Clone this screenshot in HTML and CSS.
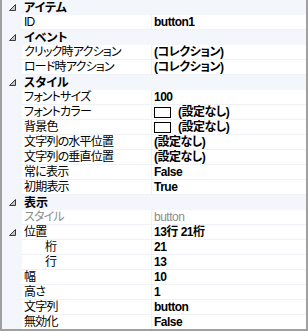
FILE: index.html
```html
<!DOCTYPE html>
<html>
<head>
    <meta charset="utf-8">
    <link rel="stylesheet" href="styles.css">
</head>
<body>
    <div class="pg-grid">
        <div class="pg-cat"><span class="pg-exp"><svg width="7" height="7" viewBox="0 0 7 7"><path d="M6.5 0.5 L6.5 6.5 L0.5 6.5 Z" fill="#c4c4c4" stroke="#3c3c3c" stroke-width="1"/></svg></span><span class="pg-cat-name">アイテム</span></div>
        <div class="pg-row"><span class="pg-margin"></span><span class="pg-label">ID</span><span class="pg-value">button1</span></div>

        <div class="pg-cat"><span class="pg-exp"><svg width="7" height="7" viewBox="0 0 7 7"><path d="M6.5 0.5 L6.5 6.5 L0.5 6.5 Z" fill="#c4c4c4" stroke="#3c3c3c" stroke-width="1"/></svg></span><span class="pg-cat-name">イベント</span></div>
        <div class="pg-row"><span class="pg-margin"></span><span class="pg-label">クリック時アクション</span><span class="pg-value">(コレクション)</span></div>
        <div class="pg-row"><span class="pg-margin"></span><span class="pg-label">ロード時アクション</span><span class="pg-value">(コレクション)</span></div>

        <div class="pg-cat"><span class="pg-exp"><svg width="7" height="7" viewBox="0 0 7 7"><path d="M6.5 0.5 L6.5 6.5 L0.5 6.5 Z" fill="#c4c4c4" stroke="#3c3c3c" stroke-width="1"/></svg></span><span class="pg-cat-name">スタイル</span></div>
        <div class="pg-row"><span class="pg-margin"></span><span class="pg-label">フォントサイズ</span><span class="pg-value">100</span></div>
        <div class="pg-row"><span class="pg-margin"></span><span class="pg-label">フォントカラー</span><span class="pg-value"><span class="pg-swatch"></span>(設定なし)</span></div>
        <div class="pg-row"><span class="pg-margin"></span><span class="pg-label">背景色</span><span class="pg-value"><span class="pg-swatch"></span>(設定なし)</span></div>
        <div class="pg-row"><span class="pg-margin"></span><span class="pg-label">文字列の水平位置</span><span class="pg-value">(設定なし)</span></div>
        <div class="pg-row"><span class="pg-margin"></span><span class="pg-label">文字列の垂直位置</span><span class="pg-value">(設定なし)</span></div>
        <div class="pg-row"><span class="pg-margin"></span><span class="pg-label">常に表示</span><span class="pg-value">False</span></div>
        <div class="pg-row"><span class="pg-margin"></span><span class="pg-label">初期表示</span><span class="pg-value">True</span></div>

        <div class="pg-cat"><span class="pg-exp"><svg width="7" height="7" viewBox="0 0 7 7"><path d="M6.5 0.5 L6.5 6.5 L0.5 6.5 Z" fill="#c4c4c4" stroke="#3c3c3c" stroke-width="1"/></svg></span><span class="pg-cat-name">表示</span></div>
        <div class="pg-row pg-disabled"><span class="pg-margin"></span><span class="pg-label">スタイル</span><span class="pg-value">button</span></div>
        <div class="pg-row"><span class="pg-margin"><svg width="7" height="7" viewBox="0 0 7 7"><path d="M6.5 0.5 L6.5 6.5 L0.5 6.5 Z" fill="#c4c4c4" stroke="#3c3c3c" stroke-width="1"/></svg></span><span class="pg-label">位置</span><span class="pg-value">13行 21桁</span></div>
        <div class="pg-row"><span class="pg-margin"></span><span class="pg-label pg-sub">桁</span><span class="pg-value">21</span></div>
        <div class="pg-row"><span class="pg-margin"></span><span class="pg-label pg-sub">行</span><span class="pg-value">13</span></div>
        <div class="pg-row"><span class="pg-margin"></span><span class="pg-label">幅</span><span class="pg-value">10</span></div>
        <div class="pg-row"><span class="pg-margin"></span><span class="pg-label">高さ</span><span class="pg-value">1</span></div>
        <div class="pg-row"><span class="pg-margin"></span><span class="pg-label">文字列</span><span class="pg-value">button</span></div>
        <div class="pg-row"><span class="pg-margin"></span><span class="pg-label">無効化</span><span class="pg-value">False</span></div>
    </div>
</body>
</html>
```

FILE: styles.css
```css
body {
    margin: 0;
    font-family: "Liberation Sans", "Noto Sans CJK JP", sans-serif;
    font-size: 12px;
    color: #000000;
    font-feature-settings: "palt";
}

.pg-grid {
    width: 308px;
    height: 331px;
    box-sizing: border-box;
    border: solid 2px #a0a0a0;
    border-top: none;
    background: #ffffff;
    overflow: hidden;
}

.pg-cat {
    display: flex;
    align-items: center;
    height: 15px;
    background: #f3f6fb;
}

.pg-exp {
    width: 20px;
    display: flex;
    justify-content: center;
    align-items: center;
}

.pg-cat-name {
    padding-left: 2px;
    font-weight: bold;
    line-height: 14px;
}

.pg-row {
    display: flex;
    height: 15px;
}

.pg-margin {
    width: 20px;
    flex: none;
    background: #f3f6fb;
    display: flex;
    justify-content: center;
    align-items: center;
}

.pg-label {
    width: 127px;
    flex: none;
    padding-left: 2px;
    line-height: 14px;
    border-right: solid 1px #eef1f6;
    border-bottom: solid 1px #eef1f6;
    white-space: nowrap;
    overflow: hidden;
    letter-spacing: -0.8px;
}

.pg-sub {
    padding-left: 23px;
    width: 106px;
}

.pg-value {
    flex: 1;
    display: flex;
    align-items: center;
    padding-left: 2px;
    line-height: 14px;
    font-weight: bold;
    border-bottom: solid 1px #eef1f6;
    white-space: nowrap;
    letter-spacing: -0.5px;
}

.pg-swatch {
    width: 15px;
    height: 9px;
    border: solid 1px #000000;
    background: #ffffff;
    margin-right: 7px;
}

.pg-disabled .pg-label,
.pg-disabled .pg-value {
    color: #8d8d8d;
    font-weight: normal;
}
```
